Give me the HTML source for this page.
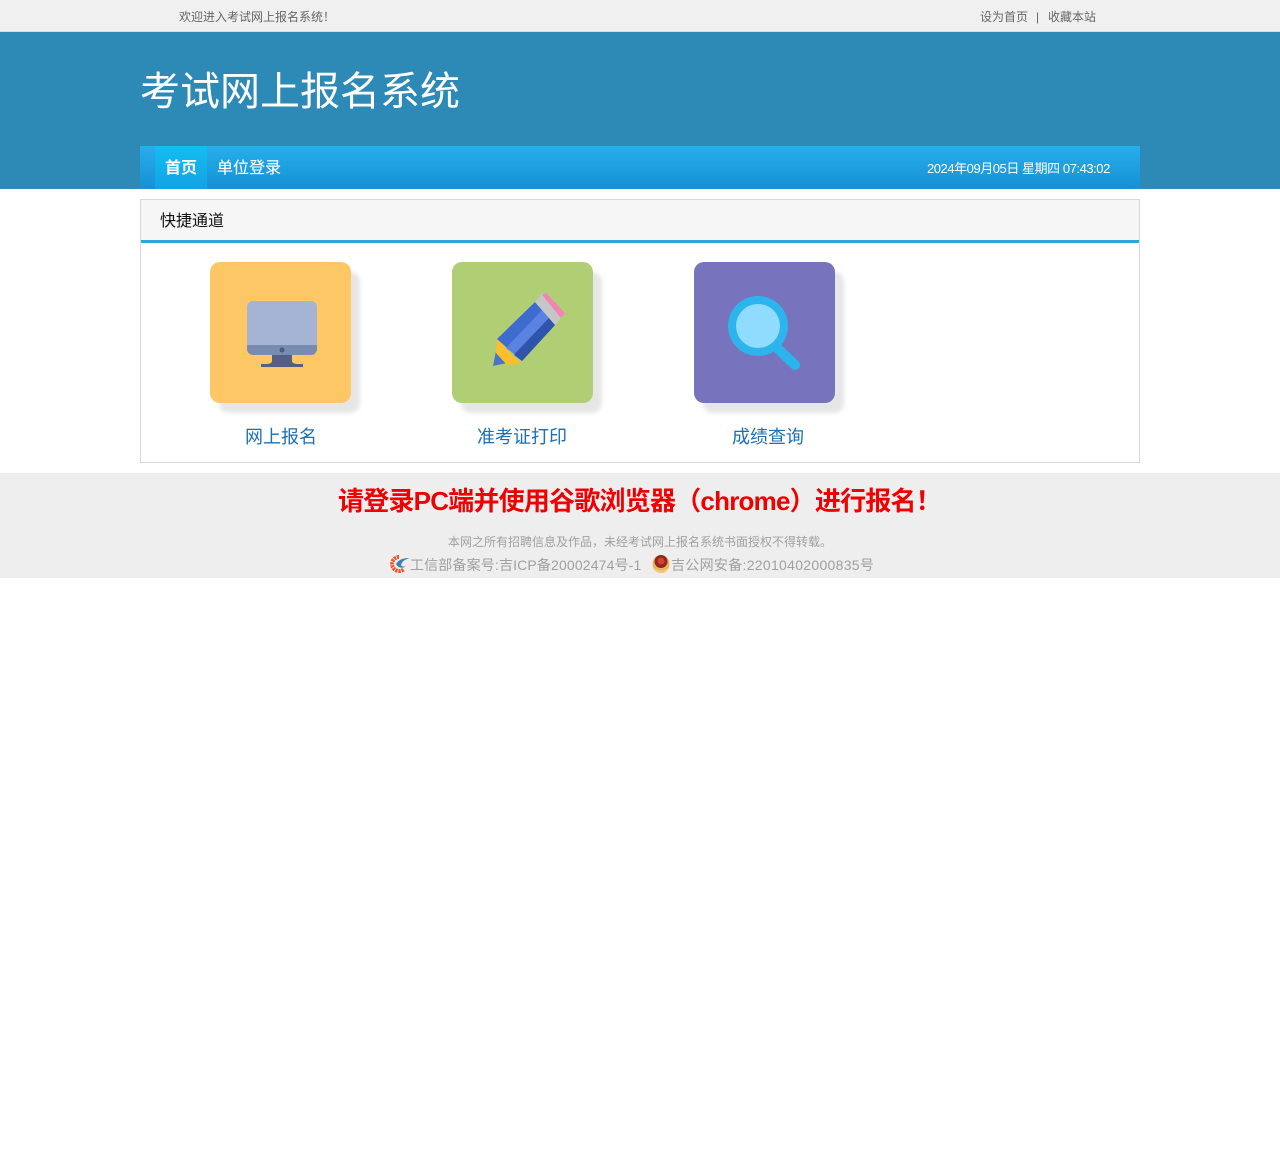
<!DOCTYPE html>
<html lang="zh-CN">
<head>
<meta charset="utf-8">
<title>考试网上报名系统</title>
<style>
html,body{margin:0;padding:0;background:#fff}
body{position:relative;width:1280px;height:1167px;overflow:hidden;font-family:"Liberation Sans","Noto Sans CJK SC",sans-serif}
.a{position:absolute;white-space:nowrap}
.t{line-height:1}
.card{position:absolute;top:262px;width:141px;height:141px;border-radius:10px;box-shadow:9px 10px 5px #e6e6e6}
.card svg{position:absolute;left:0;top:0}
.lab{position:absolute;top:427px;font-size:18px;line-height:20px;color:#1a6fb5;white-space:nowrap;letter-spacing:0}
</style>
</head>
<body>
<div class="a" style="left:0;top:0;width:1280px;height:31px;background:#f0f0f0"></div>
<div class="a" style="left:0;top:31px;width:1280px;height:1px;background:#d8dcdd"></div>
<div class="a t" style="left:179px;top:11px;font-size:12px;color:#666">欢迎进入考试网上报名系统！</div>
<div class="a t" style="left:980px;top:11px;font-size:12px;color:#666">设为首页</div>
<div class="a t" style="left:1036px;top:11px;font-size:12px;color:#666">|</div>
<div class="a t" style="left:1048px;top:11px;font-size:12px;color:#666">收藏本站</div>

<div class="a" style="left:0;top:32px;width:1280px;height:157px;background:#2d89b5"></div>
<div class="a t" style="left:140px;top:72px;font-size:40px;color:#fff;letter-spacing:0">考试网上报名系统</div>

<div class="a" style="left:140px;top:146px;width:1000px;height:43px;background:linear-gradient(#26aeeb,#1790d5)"></div>
<div class="a" style="left:155px;top:146px;width:52px;height:43px;background:linear-gradient(#14bdf2,#12a3e6)"></div>
<div class="a t" style="left:165px;top:161px;font-size:16px;font-weight:bold;color:#fff">首页</div>
<div class="a t" style="left:217px;top:161px;font-size:16px;color:#fff;-webkit-text-stroke:0.1px #fff">单位登录</div>
<div class="a t" style="left:927px;top:162px;width:183px;font-size:13px;color:#fff;letter-spacing:-0.45px">2024年09月05日 星期四 07:43:02</div>

<div class="a" style="left:140px;top:199px;width:998px;height:262px;border:1px solid #d8d8d8"></div>
<div class="a" style="left:141px;top:200px;width:998px;height:40px;background:#f6f6f6"></div>
<div class="a" style="left:141px;top:240px;width:998px;height:3px;background:#2aa9d6"></div>
<div class="a t" style="left:160px;top:214px;font-size:16px;color:#111">快捷通道</div>

<div class="card" style="left:210px;background:#fdc765">
<svg width="141" height="141" viewBox="0 0 141 141">
<path d="M37 45a6 6 0 0 1 6-6h58a6 6 0 0 1 6 6v38H37z" fill="#a5b4d4"/>
<path d="M37 83h70v4a6 6 0 0 1-6 6H43a6 6 0 0 1-6-6z" fill="#7a8bb2"/>
<circle cx="72" cy="88" r="2.5" fill="#4a5a80"/>
<path d="M62 93h20v6c0 2 3 3 6 3h5v3H51v-3h5c3 0 6-1 6-3z" fill="#545f83"/>
</svg>
</div>
<div class="lab" style="left:245px">网上报名</div>

<div class="card" style="left:452px;background:#b0cf74">
<svg width="141" height="141" viewBox="0 0 141 141">
<path d="M41 104l3-15 11 12z" fill="#4a74c9"/>
<path d="M45 77l24 25-14 1-11-12z" fill="#fdbe2c"/>
<path d="M45 77L83 40l20 23-33 36z" fill="#3f6ad0"/>
<path d="M54 86L90 48l7 8-35 36z" fill="#5a82e0"/>
<path d="M62 93L97 56l6 7-33 36z" fill="#2f55ab"/>
<path d="M83 40l7-9 23 20-10 12z" fill="#c6c6c6"/>
<path d="M90 33l4-2 19 20-4 5z" fill="#f285b3"/>
</svg>
</div>
<div class="lab" style="left:477px">准考证打印</div>

<div class="card" style="left:694px;background:#7873bd">
<svg width="141" height="141" viewBox="0 0 141 141">
<path d="M83 86l18 17" stroke="#2bb5ec" stroke-width="10" stroke-linecap="round" fill="none"/>
<circle cx="64" cy="64" r="30" fill="#2bb5ec"/>
<circle cx="64" cy="64" r="22" fill="#8fdcff"/>
</svg>
</div>
<div class="lab" style="left:732px">成绩查询</div>

<div class="a" style="left:0;top:473px;width:1280px;height:105px;background:#eeeeee"></div>
<div class="a t" style="left:338px;top:488px;font-size:26px;font-weight:bold;color:#f00000;letter-spacing:-0.78px">请登录PC端并使用谷歌浏览器（chrome）进行报名！</div>
<div class="a t" style="left:448px;top:536px;font-size:12px;color:#a0a0a0">本网之所有招聘信息及作品，未经考试网上报名系统书面授权不得转载。</div>

<svg class="a" style="left:390px;top:554px" width="20" height="20" viewBox="0 0 20 20">
<path d="M9 3a7 7 0 1 0 5 12" fill="none" stroke="#e8562a" stroke-width="4" stroke-dasharray="2.2 0.8"/>
<path d="M6 10c3-5 8-6 14-6-4 1-8 3-9 7 1 2 3 2 5 1-3 3-8 2-10-2z" fill="#3f7fb5"/>
</svg>
<div class="a t" style="left:410px;top:558px;font-size:14px;color:#a0a0a0;letter-spacing:0.15px">工信部备案号:吉ICP备20002474号-1</div>

<svg class="a" style="left:651px;top:553px" width="20" height="21" viewBox="0 0 20 21">
<ellipse cx="10" cy="11" rx="8.5" ry="9" fill="#eeb25c"/>
<circle cx="10" cy="8.5" r="6.5" fill="#8a2a20"/>
<circle cx="10" cy="8" r="3.5" fill="#d9402e"/>
<path d="M3 15q7 5 14 0-2 5-7 5t-7-5z" fill="#f2c879"/>
</svg>
<div class="a t" style="left:671px;top:558px;font-size:14px;color:#a0a0a0;letter-spacing:0.3px">吉公网安备:22010402000835号</div>
</body>
</html>
